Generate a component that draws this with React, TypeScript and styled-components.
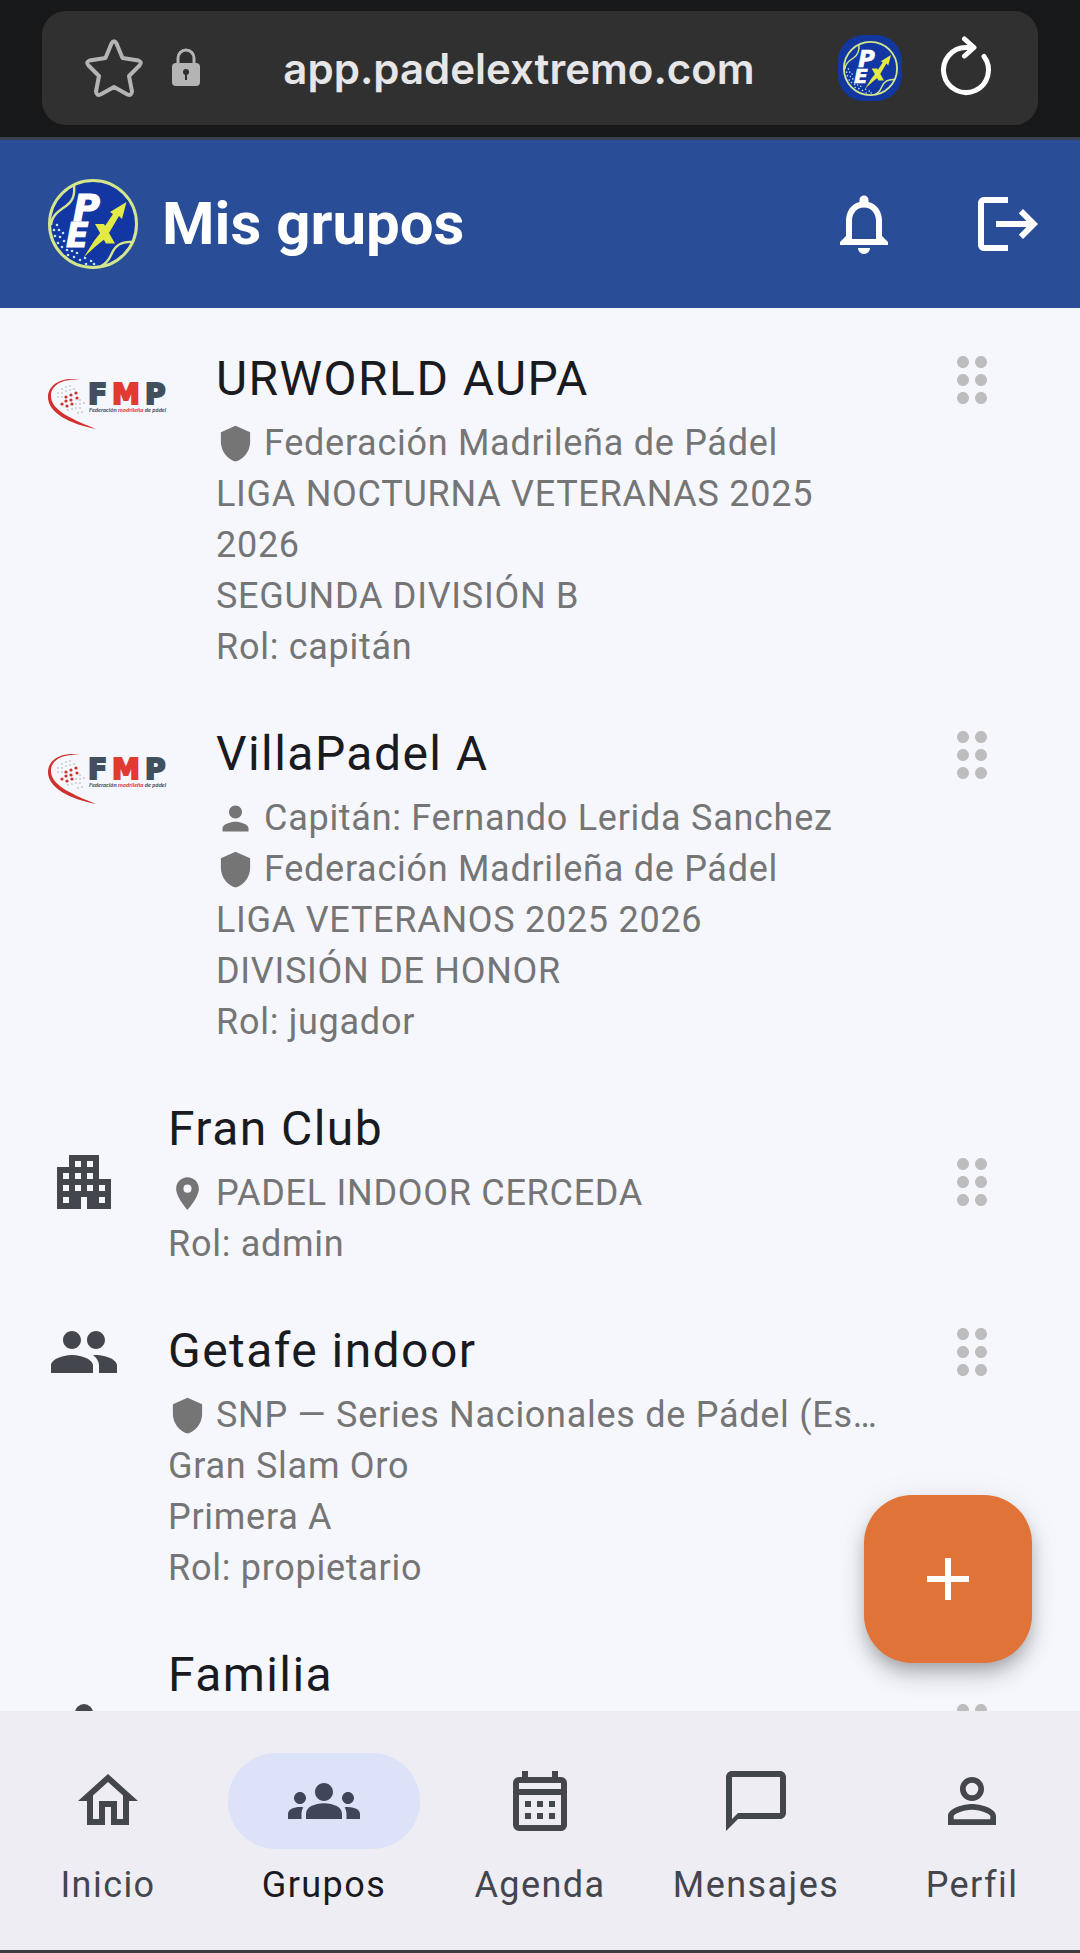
import React from 'react';
import styled, { createGlobalStyle } from 'styled-components';
import {
    MdAdd,
    MdApartment,
    MdChatBubbleOutline,
    MdDragIndicator,
    MdGroup,
    MdGroups,
    MdLocationOn,
    MdLogout,
    MdNotificationsNone,
    MdOutlineCalendarMonth,
    MdOutlineHome,
    MdPerson,
    MdPersonOutline,
    MdShield,
} from 'react-icons/md';

const GlobalStyle = createGlobalStyle`
    * {
        box-sizing: border-box;
    }

    body {
        margin: 0;
        background: #f5f7fc;
        font-family: Roboto, "Liberation Sans", sans-serif;
    }

    button, input {
        font: inherit;
        border: none;
        padding: 0;
        background: none;
        color: inherit;
    }

    button {
        cursor: pointer;
    }
`;

const Screen = styled.div`
    display: flex;
    flex-direction: column;
    height: 100vh;
    border-bottom: 3px solid #3a3a3f;
`;

/* ---------- browser bar ---------- */

const BrowserBar = styled.div`
    flex: none;
    padding: 11px 42px 12px;
    background: #17181a;
    border-bottom: 3px solid #3a4252;
`;

const AddressBox = styled.div`
    display: flex;
    align-items: center;
    height: 114px;
    padding: 0 44px 0 40px;
    border-radius: 24px;
    background: #303030;
    color: #b4b4b4;
`;

const BarButton = styled.button`
    display: flex;
    flex: none;
`;

const LockIcon = styled.svg`
    flex: none;
    margin-left: 26px;
`;

const Address = styled.input`
    flex: 1;
    min-width: 0;
    color: #e6e6e8;
    font-family: Inter, sans-serif;
    font-size: 42px;
    font-weight: 600;
    text-align: center;
    outline: none;
`;

const SiteBadge = styled.div`
    display: flex;
    align-items: center;
    justify-content: center;
    flex: none;
    width: 64px;
    height: 66px;
    margin-right: 36px;
    border-radius: 26px;
    background: #12379f;
`;

/* ---------- app bar ---------- */

const AppBar = styled.header`
    display: flex;
    align-items: center;
    flex: none;
    height: 168px;
    padding-left: 48px;
    background: #294e97;
    color: #fff;
`;

const AppTitle = styled.h1`
    flex: 1;
    margin: 0 0 0 24px;
    font-size: 60px;
    font-weight: 700;
    line-height: 72px;
`;

const IconButton = styled.button`
    display: flex;
    align-items: center;
    justify-content: center;
    width: 144px;
    height: 144px;
`;

/* ---------- group list ---------- */

const Main = styled.main`
    position: relative;
    flex: 1;
    min-height: 0;
    overflow: hidden;
`;

const GroupList = styled.ul`
    margin: 0;
    padding: 12px 0 0;
    list-style: none;
`;

const GroupItem = styled.li<{ $centered?: boolean }>`
    display: flex;
    align-items: ${({ $centered }) => ($centered ? 'center' : 'flex-start')};
    gap: 48px;
    padding: 24px 72px 22px 48px;
`;

const Leading = styled.div`
    display: flex;
    align-items: center;
    flex: none;
    min-height: 72px;
    color: #44464e;
`;

const LogoBox = styled.div`
    display: flex;
    align-items: center;
    width: 120px;
    height: 120px;
`;

const GroupBody = styled.div`
    flex: 1;
    min-width: 0;
`;

const GroupName = styled.h2`
    margin: 0 0 4px;
    color: #191b20;
    font-size: 48px;
    font-weight: 400;
    letter-spacing: 0.03em;
    line-height: 70px;
`;

const Line = styled.div`
    color: #757575;
    font-size: 36px;
    letter-spacing: 0.02em;
    line-height: 51px;
`;

const IconLine = styled(Line)`
    display: flex;
    align-items: center;
    gap: 9px;

    svg {
        flex: none;
    }

    span {
        overflow: hidden;
        text-overflow: ellipsis;
        white-space: nowrap;
    }
`;

const DragHandle = styled.button`
    display: flex;
    flex: none;
    color: #bdbdbd;
    cursor: grab;
`;

const Fab = styled.button`
    position: absolute;
    right: 48px;
    bottom: 48px;
    display: flex;
    align-items: center;
    justify-content: center;
    width: 168px;
    height: 168px;
    border-radius: 48px;
    background: #e07338;
    color: #fff;
    box-shadow: 0 9px 15px -3px rgba(0, 0, 0, 0.2), 0 14px 24px rgba(0, 0, 0, 0.14), 0 3px 36px rgba(0, 0, 0, 0.06);
`;

/* ---------- bottom navigation ---------- */

const BottomNav = styled.nav`
    display: flex;
    flex: none;
    padding: 42px 0 41px;
    background: #eeedf3;
`;

const NavLink = styled.a<{ $active?: boolean }>`
    display: flex;
    flex: 1;
    flex-direction: column;
    align-items: center;
    gap: 12px;
    color: ${({ $active }) => ($active ? '#191b20' : '#44464e')};
    font-size: 36px;
    letter-spacing: 0.04em;
    line-height: 48px;
    text-decoration: none;
`;

const NavPill = styled.span<{ $active?: boolean }>`
    display: flex;
    align-items: center;
    justify-content: center;
    width: 192px;
    height: 96px;
    border-radius: 48px;
    background: ${({ $active }) => ($active ? '#dce2f8' : 'transparent')};
    color: ${({ $active }) => ($active ? '#404659' : 'inherit')};
`;

const BallLogo: React.FC<{ size: number }> = ({ size }) => (
    <svg width={size} height={size} viewBox="0 0 90 90" role="img" aria-label="Padel Extremo">
        <circle cx="45" cy="45" r="43.5" fill="#1237a3" stroke="#d3e68c" strokeWidth="3" />
        <g fill="none" stroke="#d3e68c" strokeWidth="2.4">
            <path d="M26 6C27 16 25 22 18 27C9 33 4 37 3 46" />
            <path d="M85 63C74 62 67 67 64 74C61 81 58 85 53 87" />
        </g>
        <g fill="#bfe3ee">
            {[
                [9, 46], [6, 51], [11, 51], [15, 54], [7, 57], [12, 58], [16, 62], [10, 64], [14, 68],
                [19, 71], [24, 72], [29, 74], [20, 76], [26, 78], [32, 81], [37, 79], [43, 82], [38, 85], [46, 85],
            ].map(([x, y]) => (
                <circle key={`${x}-${y}`} cx={x} cy={y} r="1.3" />
            ))}
        </g>
        <g fontFamily="DejaVu Sans, sans-serif" fontWeight="700" fontStyle="italic" fill="#fff" stroke="#fff">
            <text x="25" y="42" fontSize="37">P</text>
            <text x="18" y="68" fontSize="33">E</text>
        </g>
        <path fill="#e3ea45" d="M47 45h9l11 19.500h-9z" />
        <path fill="#e3ea45" d="M78.500 23L74 40l-3-3-13 22-10 8-12 11 10-16 7-9 12-18-3-2z" />
    </svg>
);

const FmpLogo: React.FC = () => (
    <svg width="120" height="54" viewBox="0 0 120 54" role="img" aria-label="FMP">
        <path
            fill="#d0312d"
            d="M32 3C17-1 0 6 0 20C0 36 22 47 48 52C26 43 4 34 3 20C2 8 15 1 32 3z"
        />
        {[
            [14, 12], [18, 10], [22, 9], [10, 16], [14, 16], [18, 14], [22, 13], [26, 12],
            [10, 20], [14, 20], [32, 23], [28, 27], [32, 27], [36, 26],
            [20, 33], [24, 32], [28, 31], [32, 31], [30, 36], [34, 35],
        ].map(([x, y]) => (
            <circle key={`${x}-${y}`} cx={x} cy={y} r="1.1" fill="#c9cfd8" />
        ))}
        {[[18, 20], [23, 18], [28, 16], [14, 27], [18, 24], [23, 23], [29, 21], [19, 29], [24, 27]].map(([x, y]) => (
            <circle key={`${x}-${y}`} cx={x} cy={y} r="1.6" fill="#d0312d" />
        ))}
        <text y="27" fontFamily="DejaVu Sans, sans-serif" fontWeight="700" fontSize="28" strokeWidth="2">
            <tspan x="40" fill="#42505e" stroke="#42505e">F</tspan>
            <tspan x="64" fill="#e03a33" stroke="#e03a33">M</tspan>
            <tspan x="97" fill="#42505e" stroke="#42505e">P</tspan>
        </text>
        <text x="41" y="35" fontFamily="Lato, sans-serif" fontWeight="700" fontStyle="italic" fontSize="6">
            <tspan fill="#42505e">Federación </tspan>
            <tspan fill="#e03a33">madrileña </tspan>
            <tspan fill="#42505e">de pádel</tspan>
        </text>
    </svg>
);

const TeamIcon: React.FC = () => (
    <svg width="72" height="72" viewBox="0 0 24 24" fill="currentColor" aria-hidden="true">
        <circle cx="12" cy="7" r="3" />
        <path d="M6 18v-2c0-2.2 4-3.4 6-3.4s6 1.2 6 3.4v2z" />
    </svg>
);

interface IGroupLine {
    text: string;
    icon?: React.ReactNode;
}

interface IGroup {
    name: string;
    leading: React.ReactNode;
    centered?: boolean;
    lines: IGroupLine[];
}

const fmpLogo = <LogoBox><FmpLogo /></LogoBox>;
const shield = <MdShield size={39} />;

const groups: IGroup[] = [
    {
        name: 'URWORLD AUPA',
        leading: fmpLogo,
        lines: [
            { text: 'Federación Madrileña de Pádel', icon: shield },
            { text: 'LIGA NOCTURNA VETERANAS 2025 2026' },
            { text: 'SEGUNDA DIVISIÓN B' },
            { text: 'Rol: capitán' },
        ],
    },
    {
        name: 'VillaPadel A',
        leading: fmpLogo,
        lines: [
            { text: 'Capitán: Fernando Lerida Sanchez', icon: <MdPerson size={39} /> },
            { text: 'Federación Madrileña de Pádel', icon: shield },
            { text: 'LIGA VETERANOS 2025 2026' },
            { text: 'DIVISIÓN DE HONOR' },
            { text: 'Rol: jugador' },
        ],
    },
    {
        name: 'Fran Club',
        leading: <MdApartment size={72} />,
        centered: true,
        lines: [
            { text: 'PADEL INDOOR CERCEDA', icon: <MdLocationOn size={39} /> },
            { text: 'Rol: admin' },
        ],
    },
    {
        name: 'Getafe indoor',
        leading: <MdGroup size={72} />,
        lines: [
            { text: 'SNP — Series Nacionales de Pádel (España)', icon: shield },
            { text: 'Gran Slam Oro' },
            { text: 'Primera A' },
            { text: 'Rol: propietario' },
        ],
    },
    {
        name: 'Familia',
        leading: <TeamIcon />,
        centered: true,
        lines: [
            { text: 'Familia' },
            { text: 'Rol: propietario' },
        ],
    },
];

const navItems = [
    { label: 'Inicio', icon: <MdOutlineHome size={72} /> },
    { label: 'Grupos', icon: <MdGroups size={72} />, active: true },
    { label: 'Agenda', icon: <MdOutlineCalendarMonth size={72} /> },
    { label: 'Mensajes', icon: <MdChatBubbleOutline size={72} /> },
    { label: 'Perfil', icon: <MdPersonOutline size={72} /> },
];

const Group: React.FC<IGroup> = ({ name, leading, centered, lines }) => (
    <GroupItem $centered={centered}>
        <Leading>{leading}</Leading>
        <GroupBody>
            <GroupName>{name}</GroupName>
            {lines.map(({ text, icon }) => (
                icon
                    ? <IconLine key={text}>{icon}<span>{text}</span></IconLine>
                    : <Line key={text}>{text}</Line>
            ))}
        </GroupBody>
        <DragHandle type="button" aria-label={`Mover ${name}`}>
            <MdDragIndicator size={72} />
        </DragHandle>
    </GroupItem>
);

const App: React.FC = () => (
    <Screen>
        <GlobalStyle />
        <BrowserBar>
            <AddressBox>
                <BarButton type="button" aria-label="Favoritos">
                    <svg width="64" height="64" viewBox="0 0 64 64" fill="none" stroke="currentColor" strokeWidth="4" strokeLinejoin="round">
                        <path d="M29.5 7.500Q32 3 34.500 7.500L40.500 22L56.500 24.500Q60.500 26 57.500 29.500L47 40L50 55.500Q49.500 60 45.500 58.500L32 51L18.500 58.500Q14.500 60 14 55.500L17 40L6.500 29.500Q3.500 26 7.500 24.500L23.500 22Z" />
                    </svg>
                </BarButton>
                <LockIcon width="28" height="40" viewBox="0 0 28 40" aria-hidden="true">
                    <path d="M6 17V10a8 8 0 0 1 16 0v7" fill="none" stroke="currentColor" strokeWidth="3" />
                    <rect y="15" width="28" height="23" rx="4" fill="currentColor" />
                    <circle cx="14" cy="24" r="3" fill="#303030" />
                    <path d="M13 25h2v7h-2z" fill="#303030" />
                </LockIcon>
                <Address readOnly aria-label="Dirección" value="app.padelextremo.com" />
                <SiteBadge>
                    <BallLogo size={55} />
                </SiteBadge>
                <BarButton type="button" aria-label="Recargar">
                    <svg width="56" height="64" viewBox="0 0 56 64" fill="none" stroke="#fff" strokeWidth="5" strokeLinecap="round" strokeLinejoin="round">
                        <path d="M34 11.500H28a22.500 22.500 0 1 0 18 9" />
                        <path d="M26.500 3l9.500 8.500-9.500 8.500" />
                    </svg>
                </BarButton>
            </AddressBox>
        </BrowserBar>
        <AppBar>
            <BallLogo size={90} />
            <AppTitle>Mis grupos</AppTitle>
            <IconButton type="button" aria-label="Notificaciones">
                <MdNotificationsNone size={72} />
            </IconButton>
            <IconButton type="button" aria-label="Cerrar sesión">
                <MdLogout size={72} />
            </IconButton>
        </AppBar>
        <Main>
            <GroupList>
                {groups.map((group) => <Group key={group.name} {...group} />)}
            </GroupList>
            <Fab type="button" aria-label="Añadir grupo">
                <MdAdd size={72} />
            </Fab>
        </Main>
        <BottomNav>
            {navItems.map(({ label, icon, active }) => (
                <NavLink key={label} href={`#${label.toLowerCase()}`} $active={active}>
                    <NavPill $active={active}>{icon}</NavPill>
                    {label}
                </NavLink>
            ))}
        </BottomNav>
    </Screen>
);

export default App;
